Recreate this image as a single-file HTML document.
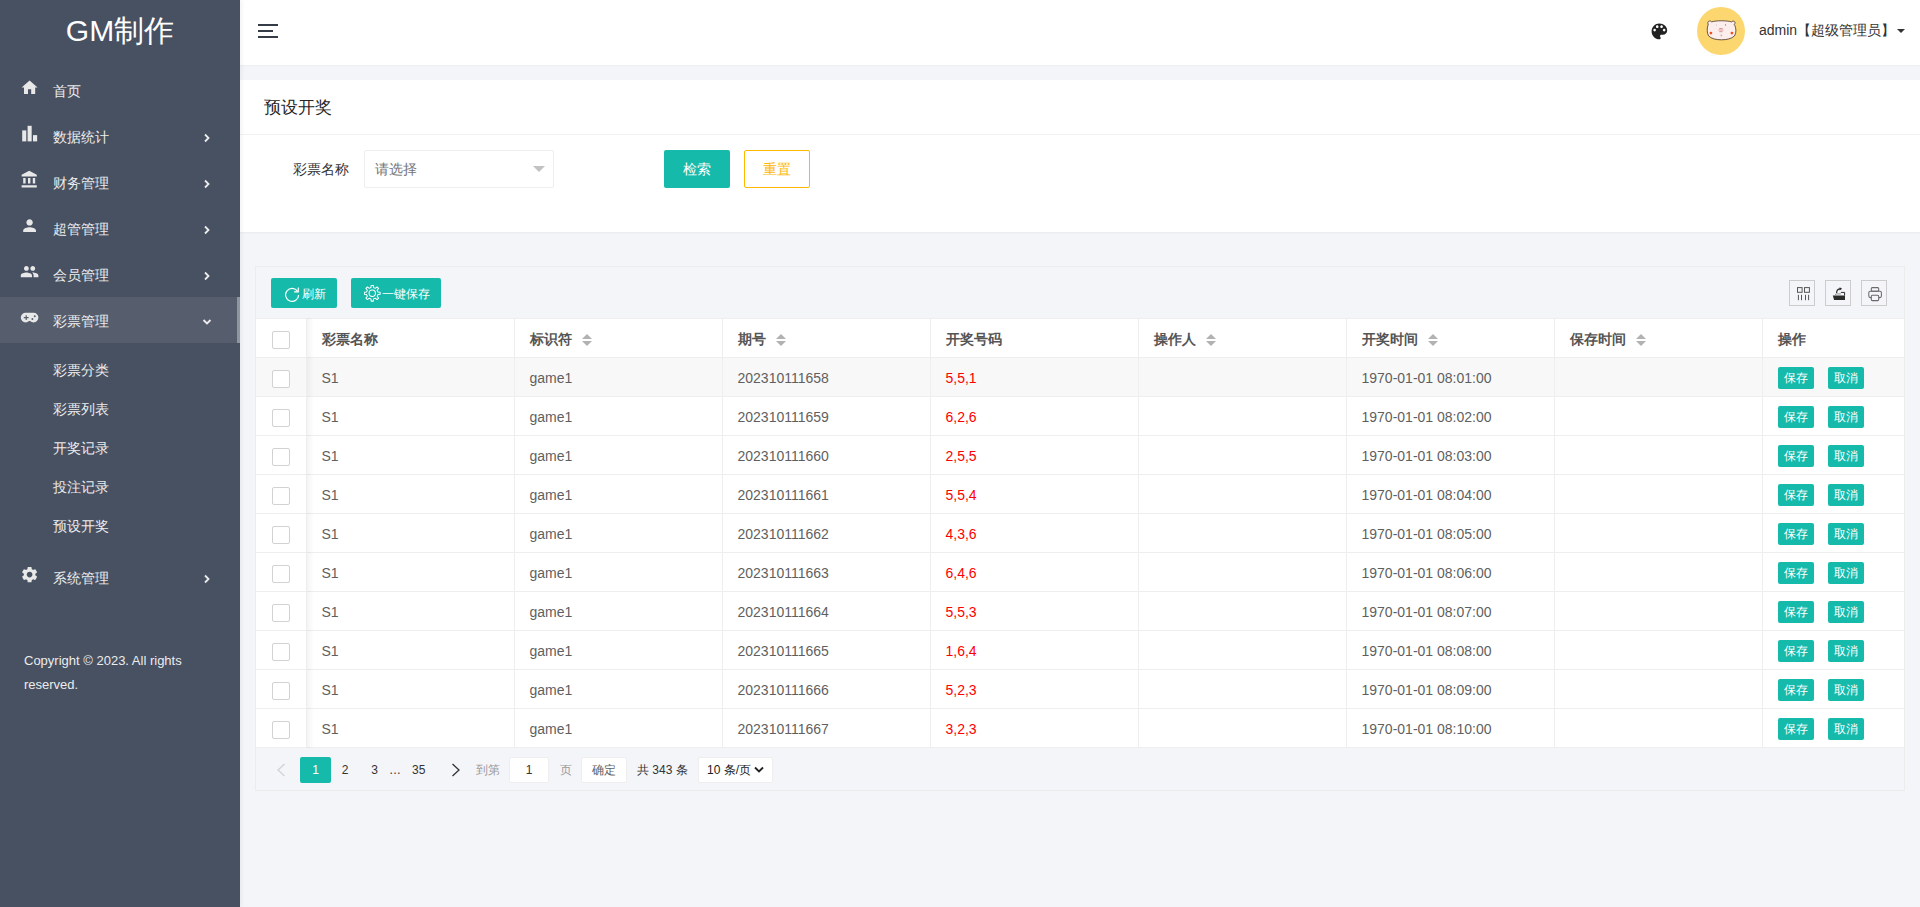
<!DOCTYPE html>
<html lang="zh">
<head>
<meta charset="utf-8">
<title>预设开奖</title>
<style>
*{box-sizing:border-box;margin:0;padding:0}
html,body{width:1920px;height:907px;overflow:hidden}
body{font-family:"Liberation Sans",sans-serif;font-size:14px;color:#333;background:#f4f5f9;position:relative}
#side{position:absolute;left:0;top:0;width:240px;height:907px;background:#475162;color:#e8e8e8;z-index:5;box-shadow:1px 0 5px rgba(0,0,0,.07)}
#logo{position:absolute;left:0;top:0;width:240px;height:61px;line-height:61px;text-align:center;font-size:30px;color:#fff}
.nav{position:absolute;left:0;width:240px;height:46px;line-height:46px;font-size:14px;color:#ececec}
.navbg{position:absolute;left:0;width:240px;height:46px;background:#565e6d}
.nav .txt{position:absolute;left:53px;top:0}
.nav svg.ic{position:absolute;left:20.3px;top:9.5px;width:19.2px;height:19.2px;fill:#e8e8e8}
.nav svg.ar{position:absolute;left:202px;top:18.500px;width:10px;height:10px}
.sub{position:absolute;left:53px;font-size:14px;color:#ececec;height:39px;line-height:39px}
#sbar{position:absolute;left:237px;top:297px;width:3px;height:46px;background:#8f96a1}
#copy{position:absolute;left:24px;top:649px;width:180px;font-size:13px;line-height:24px;color:#ececec}
#hdr{position:absolute;left:240px;top:0;width:1680px;height:65px;background:#fff;box-shadow:0 1px 2px rgba(0,0,0,.03)}
#ham{position:absolute;left:18px;top:24px;width:20px;height:14px}
#ham i{position:absolute;left:0;height:2px;background:#363c47}
#pal{position:absolute;left:1409.3px;top:20.500px;width:20.800px;height:20.800px;fill:#222}
#avatar{position:absolute;left:1457px;top:7px;width:48px;height:48px}
#user{position:absolute;left:1519px;top:0;height:60px;line-height:60px;font-size:14px;color:#333;white-space:nowrap}
#caret{position:absolute;left:1657px;top:29px;width:0;height:0;border:4px solid transparent;border-top-color:#333;border-bottom:none}
#card1{position:absolute;left:240px;top:80px;width:1680px;height:152px;background:#fff;box-shadow:0 1px 2px rgba(0,0,0,.05)}
#card1 h2{position:absolute;left:24px;top:1px;height:54px;line-height:54px;font-size:17px;font-weight:normal;color:#262626}
#card1 .line{position:absolute;left:0;top:54px;width:100%;height:1px;background:#f2f2f2}
#lab{position:absolute;left:53px;top:70px;height:38px;line-height:38px;font-size:14px;color:#333}
#sel{position:absolute;left:124px;top:70px;width:190px;height:38px;border:1px solid #eee;border-radius:2px;background:#fff;line-height:36px;padding-left:10px;color:#757575;font-size:14px}
#sel i{position:absolute;right:8.500px;top:15px;border:6px solid transparent;border-top-color:#c2c2c2;border-bottom:none;width:0;height:0}
.btn{position:absolute;height:38px;line-height:38px;text-align:center;font-size:14px;border-radius:2px}
#b1{left:424px;top:70px;width:66px;background:#16baaa;color:#fff}
#b2{left:504px;top:70px;width:66px;border:1px solid #ffb800;color:#ffb800;line-height:36px;background:#fff}
#tbl{position:absolute;left:255px;top:266px;width:1650px;height:525px;border:1px solid #ececec;background:#f4f5f9}
.tb{position:absolute;top:11px;height:30px;line-height:30px;background:#16baaa;color:#fff;font-size:12px;border-radius:2px;white-space:nowrap}
.tb svg{position:absolute;top:7px;width:16px;height:16px}
.tool{position:absolute;top:13px;width:26px;height:26px;border:1px solid #ccc}
.tool svg{position:absolute;left:0;top:0;width:24px;height:24px}
#grid{position:absolute;left:0;top:51px;width:1648px;border-collapse:collapse;background:#fff;table-layout:fixed}
#grid td,#grid th{height:39px;border:1px solid #eee;padding:2px 15px 0;font-size:14px;color:#5f5f5f;text-align:left;font-weight:normal;white-space:nowrap;overflow:hidden;line-height:36px}
#grid th{color:#555;font-weight:bold}
#grid tr.hv td{background:#f8f8f8}
#grid td.red{color:#ff0000}
#grid td.c0,#grid th.c0{padding:0;text-align:center;border-left:none;line-height:38px}
#grid td:last-child,#grid th:last-child{border-right:none}
.cb{display:inline-block;width:18px;height:18px;border:1px solid #d2d2d2;border-radius:2px;background:#fff;vertical-align:middle;position:relative;top:1px}
.ob{display:inline-block;width:36px;height:22px;line-height:22px;text-align:center;background:#16baaa;color:#fff;font-size:12px;border-radius:2px;vertical-align:middle;position:relative;top:-1px}
.ob2{margin-left:14px}
.sort{display:inline-block;position:relative;width:10px;height:12px;margin-left:10px;vertical-align:-2px}
.sort:before{content:"";position:absolute;left:0;top:0;border:5px solid transparent;border-bottom-color:#b2b2b2;border-top:none}
.sort:after{content:"";position:absolute;left:0;bottom:0;border:5px solid transparent;border-top-color:#b2b2b2;border-bottom:none}
#shl{position:absolute;left:51px;top:51px;width:7px;height:430px;background:linear-gradient(to right,rgba(0,0,0,.045),rgba(0,0,0,0))}
#shr{position:absolute;left:1500px;top:51px;width:6px;height:430px;background:linear-gradient(to left,rgba(0,0,0,.07),rgba(0,0,0,0))}
#pg{position:absolute;left:0;top:481px;width:1648px;height:42px;font-size:12px;color:#333}
#pg span,#pg div{position:absolute;top:9px;height:26px;line-height:26px;white-space:nowrap}
#pg .bx{background:#fff;border:1px solid #eee;border-radius:2px;text-align:center;line-height:24px}
</style>
</head>
<body>
<div id="side">
<div id="logo">GM制作</div>
<div class="nav" style="top:68px"><svg class="ic" viewBox="0 0 24 24"><path d="M10 20v-6h4v6h5v-8h3L12 3 2 12h3v8z"/></svg><span class="txt">首页</span></div>
<div class="nav" style="top:114px"><svg class="ic" viewBox="0 0 24 24"><rect x="2.75" y="8" width="5.1" height="13.75"/><rect x="9.5" y="2.25" width="5.1" height="19.5"/><rect x="16.25" y="13.9" width="5.2" height="7.85"/></svg><span class="txt">数据统计</span><svg class="ar" viewBox="0 0 10 10"><path d="M3 1.500L6.500 5 3 8.500" fill="none" stroke="#ececec" stroke-width="1.800"/></svg></div>
<div class="nav" style="top:160px"><svg class="ic" viewBox="0 0 24 24"><path d="M4 10v7h3v-7H4zm6 0v7h3v-7h-3zM2 22h19v-3H2v3zm14-12v7h3v-7h-3zm-4.5-9L2 6v2h19V6l-9.5-5z"/></svg><span class="txt">财务管理</span><svg class="ar" viewBox="0 0 10 10"><path d="M3 1.500L6.500 5 3 8.500" fill="none" stroke="#ececec" stroke-width="1.800"/></svg></div>
<div class="nav" style="top:206px"><svg class="ic" viewBox="0 0 24 24"><path d="M12 12c2.21 0 4-1.79 4-4s-1.79-4-4-4-4 1.79-4 4 1.79 4 4 4zm0 2c-2.67 0-8 1.34-8 4v2h16v-2c0-2.660-5.330-4-8-4z"/></svg><span class="txt">超管管理</span><svg class="ar" viewBox="0 0 10 10"><path d="M3 1.500L6.500 5 3 8.500" fill="none" stroke="#ececec" stroke-width="1.800"/></svg></div>
<div class="nav" style="top:252px"><svg class="ic" viewBox="0 0 24 24"><path d="M16 11c1.66 0 2.990-1.340 2.990-3S17.660 5 16 5c-1.660 0-3 1.340-3 3s1.340 3 3 3zm-8 0c1.660 0 2.990-1.340 2.990-3S9.660 5 8 5C6.340 5 5 6.340 5 8s1.340 3 3 3zm0 2c-2.330 0-7 1.170-7 3.500V19h14v-2.500c0-2.330-4.670-3.500-7-3.500zm8 0c-.290 0-.620.020-.970.050 1.160.840 1.970 1.970 1.970 3.450V19h6v-2.500c0-2.330-4.670-3.500-7-3.500z"/></svg><span class="txt">会员管理</span><svg class="ar" viewBox="0 0 10 10"><path d="M3 1.500L6.500 5 3 8.500" fill="none" stroke="#ececec" stroke-width="1.800"/></svg></div>
<div class="navbg" style="top:297px"></div><div class="nav" style="top:298px"><svg class="ic" viewBox="0 0 24 24"><path fill-rule="evenodd" d="M7 6h10a6 6 0 0 1 0 12c-1.700 0-3.200-.700-4.300-1.800h-1.400C10.200 17.300 8.700 18 7 18a6 6 0 0 1 0-12zM7 9v2.250H4.750v1.500H7V15h1.500v-2.250h2.250v-1.500H8.500V9zM15.500 12.500a1.250 1.250 0 1 0 0 2.500 1.250 1.250 0 0 0 0-2.500zM18.500 9a1.250 1.250 0 1 0 0 2.500 1.250 1.250 0 0 0 0-2.500z"/></svg><span class="txt">彩票管理</span><svg class="ar" viewBox="0 0 10 10"><path d="M1.500 3L5 6.500 8.500 3" fill="none" stroke="#ececec" stroke-width="1.800"/></svg></div>
<div class="nav" style="top:555px"><svg class="ic" viewBox="0 0 24 24"><path d="M19.14 12.94c.04-.3.06-.61.06-.94 0-.32-.02-.64-.07-.94l2.030-1.580c.18-.14.23-.41.12-.61l-1.920-3.320c-.12-.22-.37-.29-.59-.22l-2.390.96c-.5-.38-1.030-.7-1.620-.94l-.36-2.540c-.04-.24-.24-.41-.48-.41h-3.840c-.24 0-.43.17-.47.41l-.36 2.540c-.59.24-1.130.57-1.620.94l-2.390-.96c-.22-.08-.47 0-.59.22L2.740 8.870c-.12.21-.08.47.12.61l2.030 1.580c-.05.3-.09.63-.09.940s.02.640.07.940l-2.030 1.580c-.18.14-.23.41-.12.61l1.920 3.320c.12.22.37.29.59.22l2.390-.96c.5.38 1.030.7 1.620.94l.36 2.540c.05.24.24.41.48.41h3.840c.24 0 .44-.17.47-.41l.36-2.540c.59-.24 1.130-.56 1.620-.94l2.390.96c.22.08.47 0 .59-.22l1.920-3.320c.12-.22.07-.47-.12-.61l-2.010-1.580zM12 15.600c-1.980 0-3.600-1.620-3.600-3.600s1.620-3.600 3.600-3.600 3.600 1.620 3.600 3.600-1.620 3.600-3.600 3.600z"/></svg><span class="txt">系统管理</span><svg class="ar" viewBox="0 0 10 10"><path d="M3 1.500L6.500 5 3 8.500" fill="none" stroke="#ececec" stroke-width="1.800"/></svg></div>
<div class="sub" style="top:351px">彩票分类</div>
<div class="sub" style="top:390px">彩票列表</div>
<div class="sub" style="top:429px">开奖记录</div>
<div class="sub" style="top:468px">投注记录</div>
<div class="sub" style="top:507px">预设开奖</div>

<div id="sbar"></div>
<div id="copy">Copyright © 2023. All rights reserved.</div>
</div>
<div id="hdr">
<div id="ham"><i style="top:0;width:20px"></i><i style="top:6px;width:15px"></i><i style="top:12px;width:20px"></i></div>
<svg id="pal" viewBox="0 0 24 24"><path d="M12 3c-4.970 0-9 4.030-9 9s4.030 9 9 9c.830 0 1.500-.670 1.500-1.500 0-.390-.150-.740-.390-1.010-.230-.260-.380-.610-.380-.990 0-.830.670-1.500 1.500-1.500H16c2.760 0 5-2.240 5-5 0-4.420-4.030-8-9-8zm-5.500 9c-.830 0-1.500-.670-1.500-1.500S5.670 9 6.500 9 8 9.670 8 10.500 7.330 12 6.500 12zm3-4C8.670 8 8 7.330 8 6.500S8.670 5 9.500 5s1.500.670 1.500 1.500S10.330 8 9.500 8zm5 0c-.830 0-1.500-.670-1.500-1.500S13.670 5 14.500 5s1.500.670 1.500 1.500S15.330 8 14.500 8zm3 4c-.830 0-1.500-.670-1.500-1.500S16.670 9 17.500 9s1.500.670 1.500 1.500-.670 1.500-1.500 1.500z"/></svg>
<svg id="avatar" viewBox="0 0 48 48"><circle cx="24" cy="24" r="24" fill="#fcd66f"/>
<path d="M11.300 17c-.800-.900-.600-2.300.500-2.800 1-.500 2.200-.100 2.800.700C19 13.400 30 13.400 34.500 14.900c.700-.800 2-1 2.900-.400 1 .700.800 2.100-.200 2.800C39.500 21 39.300 26.500 37.300 29 34.500 31.800 29.500 32.800 24.500 32.800S14 31.800 11.600 28.800C9.800 26 9.800 21 11.300 17z" fill="#fdeeee" stroke="#3a2a22" stroke-width=".75"/>
<ellipse cx="23.900" cy="23" rx="2.800" ry="1.800" fill="#f9c0c0"/><rect x="22.300" y="21" width="3.200" height=".5" fill="#8a6a6a"/><rect x="22.300" y="24.600" width="3.200" height=".5" fill="#8a6a6a"/>
<circle cx="13.900" cy="26.100" r="1.400" fill="#f4511e"/><circle cx="34.900" cy="26.100" r="1.400" fill="#f4511e"/>
<rect x="19.400" y="17.400" width=".5" height="1.300" fill="#aaa"/><rect x="28.400" y="17.200" width=".6" height="1.500" fill="#555"/>
<rect x="23.800" y="27.600" width=".8" height="1.800" fill="#888"/>
</svg>
<div id="user">admin【超级管理员】</div><i id="caret"></i>
</div>
<div id="card1"><h2>预设开奖</h2><div class="line"></div>
<div id="lab">彩票名称</div>
<div id="sel">请选择<i></i></div>
<div class="btn" id="b1">检索</div><div class="btn" id="b2">重置</div>
</div>
<div id="tbl">
<div class="tb" style="left:15px;width:66px"><svg style="left:13px;top:7.500px" viewBox="0 0 16 16"><path d="M13.600 5.400A6.500 6.500 0 1 0 14.600 9" fill="none" stroke="#fff" stroke-width="1.200"/><path d="M14.300 1.600v4.200h-4.200" fill="none" stroke="#fff" stroke-width="1.200"/></svg><span style="position:absolute;left:30.500px;top:1px">刷新</span></div>
<div class="tb" style="left:95px;width:90px"><svg style="left:13px;top:7px;width:16.500px;height:16.500px" viewBox="0 0 16 16"><circle cx="8" cy="8" r="3.100" fill="none" stroke="#fff" stroke-width="1"/><path d="M6.69 2.55 L6.97 0.37 L9.03 0.37 L9.31 2.55 L10.93 3.23 L12.67 1.88 L14.12 3.33 L12.77 5.07 L13.45 6.69 L15.63 6.97 L15.63 9.03 L13.45 9.31 L12.77 10.93 L14.12 12.67 L12.67 14.12 L10.93 12.77 L9.31 13.45 L9.03 15.63 L6.97 15.63 L6.69 13.45 L5.07 12.77 L3.33 14.12 L1.88 12.67 L3.23 10.93 L2.55 9.31 L0.37 9.03 L0.37 6.97 L2.55 6.69 L3.23 5.07 L1.88 3.33 L3.33 1.88 L5.07 3.23Z" fill="none" stroke="#fff" stroke-width="1" stroke-linejoin="round"/></svg><span style="position:absolute;left:31px;top:1px">一键保存</span></div>
<div class="tool" style="left:1533px"><svg viewBox="0 0 24 24"><g fill="none" stroke="#555" stroke-width="1"><rect x="7.500" y="6.600" width="4.600" height="4.700"/><rect x="14.500" y="6.600" width="4.900" height="4.700"/></g><g fill="#555"><rect x="7.900" y="13.800" width="1" height="5.400"/><rect x="11" y="13.800" width="1" height="5.400"/><rect x="15" y="13.800" width="1" height="5.400"/><rect x="18.100" y="13.800" width="1" height="5.400"/></g></svg></div>
<div class="tool" style="left:1569px"><svg viewBox="0 0 24 24"><path d="M6.800 14.400h12.200v4.700H8.100z" fill="#2a2a2a"/><path d="M14.900 11.400h3.700v3" fill="none" stroke="#2a2a2a" stroke-width="1"/><path d="M9 14.200l.9-1.300h5" fill="none" stroke="#777" stroke-width=".8"/><path d="M10.600 12c0-2.600 1.500-4.200 3.800-4.200" fill="none" stroke="#2a2a2a" stroke-width="1.200"/><path d="M13.600 6.200l2.500 1.600-2.500 1.700z" fill="#2a2a2a"/></svg></div>
<div class="tool" style="left:1605px"><svg viewBox="0 0 24 24"><g fill="none" stroke="#6a6a6a" stroke-width="1.050"><rect x="9.300" y="6.600" width="7.400" height="3.600" rx="1"/><rect x="6.800" y="10.200" width="12.600" height="6.400" rx="1.500"/><rect x="9.300" y="14.200" width="7.400" height="5.400" rx="1" fill="#f4f5f9"/></g></svg></div>
<table id="grid"><colgroup><col style="width:50px"><col style="width:208px"><col style="width:208px"><col style="width:208px"><col style="width:208px"><col style="width:208px"><col style="width:208px"><col style="width:208px"><col style="width:142px"></colgroup>
<tr><th class="c0"><span class="cb"></span></th><th>彩票名称</th><th>标识符<i class="sort"></i></th><th>期号<i class="sort"></i></th><th>开奖号码</th><th>操作人<i class="sort"></i></th><th>开奖时间<i class="sort"></i></th><th>保存时间<i class="sort"></i></th><th>操作</th></tr>
<tr class="hv"><td class="c0"><span class="cb"></span></td><td>S1</td><td>game1</td><td>202310111658</td><td class="red">5,5,1</td><td></td><td>1970-01-01 08:01:00</td><td></td><td class="op"><span class="ob">保存</span><span class="ob ob2">取消</span></td></tr>
<tr><td class="c0"><span class="cb"></span></td><td>S1</td><td>game1</td><td>202310111659</td><td class="red">6,2,6</td><td></td><td>1970-01-01 08:02:00</td><td></td><td class="op"><span class="ob">保存</span><span class="ob ob2">取消</span></td></tr>
<tr><td class="c0"><span class="cb"></span></td><td>S1</td><td>game1</td><td>202310111660</td><td class="red">2,5,5</td><td></td><td>1970-01-01 08:03:00</td><td></td><td class="op"><span class="ob">保存</span><span class="ob ob2">取消</span></td></tr>
<tr><td class="c0"><span class="cb"></span></td><td>S1</td><td>game1</td><td>202310111661</td><td class="red">5,5,4</td><td></td><td>1970-01-01 08:04:00</td><td></td><td class="op"><span class="ob">保存</span><span class="ob ob2">取消</span></td></tr>
<tr><td class="c0"><span class="cb"></span></td><td>S1</td><td>game1</td><td>202310111662</td><td class="red">4,3,6</td><td></td><td>1970-01-01 08:05:00</td><td></td><td class="op"><span class="ob">保存</span><span class="ob ob2">取消</span></td></tr>
<tr><td class="c0"><span class="cb"></span></td><td>S1</td><td>game1</td><td>202310111663</td><td class="red">6,4,6</td><td></td><td>1970-01-01 08:06:00</td><td></td><td class="op"><span class="ob">保存</span><span class="ob ob2">取消</span></td></tr>
<tr><td class="c0"><span class="cb"></span></td><td>S1</td><td>game1</td><td>202310111664</td><td class="red">5,5,3</td><td></td><td>1970-01-01 08:07:00</td><td></td><td class="op"><span class="ob">保存</span><span class="ob ob2">取消</span></td></tr>
<tr><td class="c0"><span class="cb"></span></td><td>S1</td><td>game1</td><td>202310111665</td><td class="red">1,6,4</td><td></td><td>1970-01-01 08:08:00</td><td></td><td class="op"><span class="ob">保存</span><span class="ob ob2">取消</span></td></tr>
<tr><td class="c0"><span class="cb"></span></td><td>S1</td><td>game1</td><td>202310111666</td><td class="red">5,2,3</td><td></td><td>1970-01-01 08:09:00</td><td></td><td class="op"><span class="ob">保存</span><span class="ob ob2">取消</span></td></tr>
<tr><td class="c0"><span class="cb"></span></td><td>S1</td><td>game1</td><td>202310111667</td><td class="red">3,2,3</td><td></td><td>1970-01-01 08:10:00</td><td></td><td class="op"><span class="ob">保存</span><span class="ob ob2">取消</span></td></tr>
</table>
<div id="shl"></div>
<div id="pg">
<svg style="position:absolute;left:20px;top:15px;width:10px;height:14px" viewBox="0 0 10 14"><path d="M8.500 1L2 7l6.500 6" fill="none" stroke="#d2d2d2" stroke-width="1.300"/></svg>
<div style="left:44px;width:31px;background:#16baaa;color:#fff;text-align:center;border-radius:2px">1</div>
<span style="left:85.700px">2</span><span style="left:115.300px">3</span><span style="left:133px;color:#333">…</span><span style="left:156px">35</span>
<svg style="position:absolute;left:195px;top:15px;width:10px;height:14px" viewBox="0 0 10 14"><path d="M1.500 1L8 7l-6.500 6" fill="none" stroke="#333" stroke-width="1.300"/></svg>
<span style="left:220px;color:#999">到第</span>
<div class="bx" style="left:253px;width:40px;color:#333">1</div>
<span style="left:303.500px;color:#999">页</span>
<div class="bx" style="left:325px;width:46px;color:#5f5f5f">确定</div>
<span style="left:381px">共 343 条</span>
<div class="bx" style="left:442px;width:75px;text-align:left;padding-left:8px;color:#222">10 条/页<svg style="position:absolute;left:55px;top:8px;width:10px;height:8px" viewBox="0 0 10 8"><path d="M1 1.500l4 4 4-4" fill="none" stroke="#222" stroke-width="1.800"/></svg></div>
</div>
</div>
</body>
</html>
